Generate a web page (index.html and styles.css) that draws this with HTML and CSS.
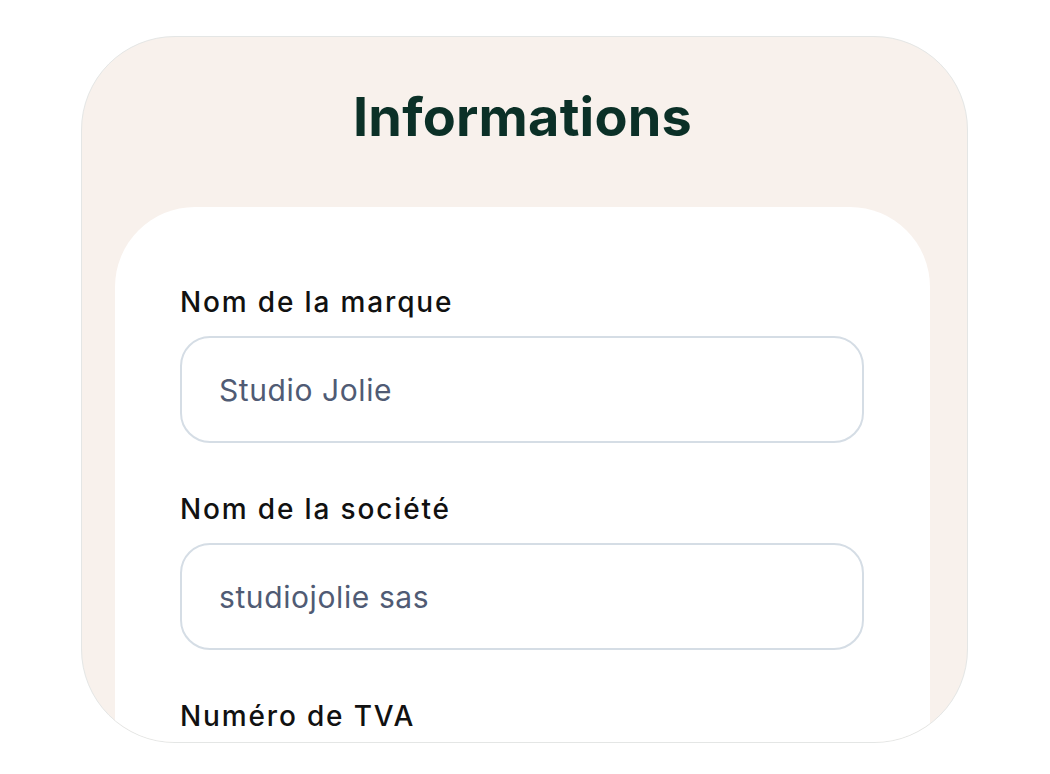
FILE: index.html
```html
<!DOCTYPE html>
<html lang="fr">
<head>
<meta charset="utf-8">
<title>Informations</title>
<link rel="stylesheet" href="styles.css">
</head>
<body>
<div class="page">
  <section class="panel">
    <h1 class="title">Informations</h1>
    <div class="sheet">
      <div class="field">
        <label class="label">Nom de la marque</label>
        <div class="input">Studio Jolie</div>
      </div>
      <div class="field">
        <label class="label">Nom de la société</label>
        <div class="input">studiojolie sas</div>
      </div>
      <div class="field">
        <label class="label">Numéro de TVA</label>
        <div class="input"></div>
      </div>
    </div>
  </section>
</div>
</body>
</html>
```

FILE: styles.css
```css
html, body {
  margin: 0;
  padding: 0;
  background: #ffffff;
}
body {
  font-family: Inter, "Noto Sans", sans-serif;
}
.page {
  padding: 36px 0 0 81px;
}
.panel {
  box-sizing: border-box;
  width: 887px;
  height: 707px;
  padding: 0 37px 0 33px;
  background: #f8f1ec;
  border: 1.5px solid #e4e6e5;
  border-radius: 94px;
  overflow: hidden;
  display: flex;
  flex-direction: column;
  align-items: stretch;
}
.title {
  margin: 47px 0 0;
  text-align: center;
  font-size: 54px;
  font-weight: 700;
  color: #0b3027;
  line-height: 66px;
  letter-spacing: 0.2px;
}
.sheet {
  box-sizing: border-box;
  margin-top: 57px;
  flex: 1;
  background: #ffffff;
  border-radius: 80px 80px 0 0;
  padding: 78px 66px 0 65px;
  display: flex;
  flex-direction: column;
  gap: 49px;
}
.field {
  display: flex;
  flex-direction: column;
  gap: 17px;
}
.label {
  font-size: 28px;
  font-weight: 500;
  color: #111111;
  line-height: 34px;
  letter-spacing: 1.85px;
}
.input {
  box-sizing: border-box;
  height: 107px;
  border: 2px solid #d5dde5;
  border-radius: 30px;
  padding: 0 37px;
  display: flex;
  align-items: center;
  font-size: 30px;
  color: #505b74;
  letter-spacing: 0.6px;
}
```
